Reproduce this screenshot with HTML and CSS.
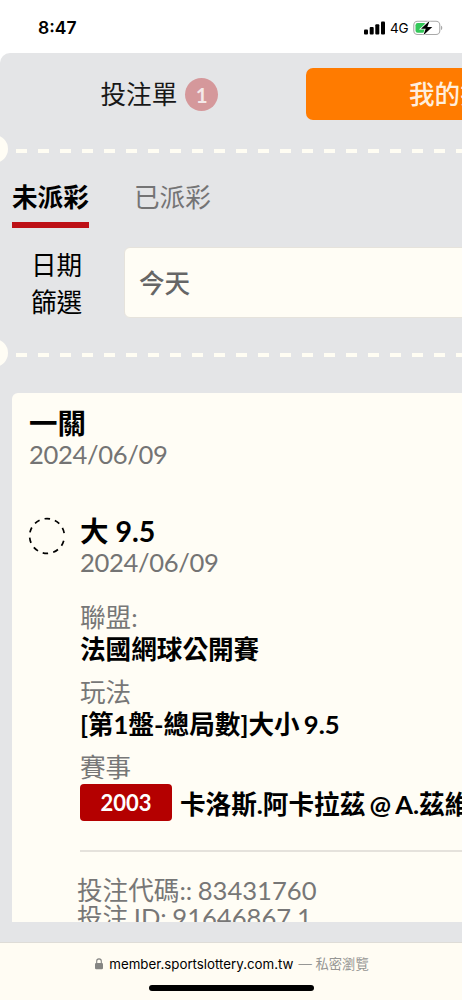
FILE: index.html
```
<!DOCTYPE html>
<html lang="zh-Hant">
<head>
<meta charset="utf-8">
<title>投注單</title>
<link rel="stylesheet" href="styles.css">
</head>
<body>
<div class="status">
  <span class="clock">8:47</span>
  <div class="status-icons">
    <svg class="signal" width="21" height="14" viewBox="0 0 21 14"><rect x="0" y="8.5" width="4" height="5" rx="1"/><rect x="5.7" y="6" width="4" height="7.5" rx="1"/><rect x="11.3" y="3.3" width="4" height="10.2" rx="1"/><rect x="17" y="0.5" width="4" height="13" rx="1"/></svg>
    <span class="network">4G</span>
    <svg class="battery" width="30" height="16" viewBox="0 0 30 16"><rect x=".8" y="1.3" width="26" height="13.2" rx="3.8" fill="none" stroke="#a9a9a9" stroke-width="1.1"/><path d="M28 5.8c1.7.5 1.7 3.7 0 4.2z" fill="#a9a9a9"/><rect x="2.5" y="3" width="10.5" height="9.8" rx="2.2" fill="#34c759"/><path d="M16.6.8 8 8.8h4.7L10.4 15.2 19.3 6.9h-5z" fill="#000" stroke="#fff" stroke-width="1.6" paint-order="stroke"/></svg>
  </div>
</div>
<main class="slip">
  <nav class="switch">
    <div class="switch-item">投注單<span class="count">1</span></div>
    <div class="switch-item active">我的投注</div>
  </nav>
  <div class="perforation"><span class="notch"></span><span class="dashes"></span></div>
  <div class="tabs"><span class="tab selected">未派彩</span><span class="tab">已派彩</span></div>
  <div class="filter">
    <div class="filter-label">日期<br>篩選</div>
    <div class="select">今天</div>
  </div>
  <div class="perforation second"><span class="notch"></span><span class="dashes"></span></div>
  <section class="card">
    <h2 class="title">一關</h2>
    <div class="date">2024/06/09</div>
    <div class="bet">
      <svg class="ring" width="38" height="38" viewBox="0 0 38 38"><circle cx="19" cy="19" r="17.4" transform="rotate(16 19 19)" stroke-dasharray="5.4 5.2 5.4 5.2 5.4 5.2 5.4 5.2 5.4 5.2 5.4 5.2 5.4 5.2 5.4 5.2 5.4 5.2 5.4 9" fill="none" stroke="#000" stroke-width="1.7"/></svg>
      <div class="details">
        <h2 class="title">大 9.5</h2>
        <div class="date">2024/06/09</div>
        <dl class="facts">
          <dt>聯盟:</dt><dd>法國網球公開賽</dd>
          <dt>玩法</dt><dd>[第1盤-總局數]大小 9.5</dd>
          <dt>賽事</dt><dd class="match"><span class="badge">2003</span><span class="players">卡洛斯.阿卡拉茲 @ A.茲維列夫</span></dd>
        </dl>
        <div class="codes"><div>投注代碼:: 83431760</div><div>投注 ID: 91646867.1</div></div>
      </div>
    </div>
  </section>
</main>
<footer class="browser-bar">
  <div class="address"><svg class="lock" width="8" height="12" viewBox="0 0 8 12"><path d="M1.7 6V3.2a2.3 2.3 0 0 1 4.6 0V6" fill="none" stroke="#858583" stroke-width="1.1"/><rect x="0" y="5" width="8" height="6.3" rx="1.2" fill="#858583"/></svg><span class="domain">member.sportslottery.com.tw</span><span class="private">— 私密瀏覽</span></div>
  <div class="home"></div>
</footer>
</body>
</html>
```
FILE: styles.css
```
* { box-sizing: border-box; }
body {
  margin: 0;
  width: 462px;
  height: 1000px;
  overflow: hidden;
  display: flex;
  flex-direction: column;
  background: #fff;
  color: #000;
  font: 25.6px/30px Lato, "Noto Sans CJK TC", sans-serif;
}
.status {
  height: 53px;
  flex: none;
  display: flex;
  justify-content: space-between;
  align-items: flex-start;
  padding: 17px 19px 0 38px;
  font-family: Inter, sans-serif;
}
.clock { font-size: 17.5px; line-height: 22px; font-weight: 600; }
.status-icons { display: flex; align-items: center; height: 22px; }
.network { margin: 0 5px 0 5px; font-size: 13.5px; line-height: 22px; width: 18px; letter-spacing: -0.2px; }
.slip {
  height: 889px;
  flex: none;
  background: #e4e5e7;
  border-top-left-radius: 10px;
  overflow: hidden;
}
.switch { display: flex; height: 82px; padding: 15px 0; white-space: nowrap; }
.switch-item {
  flex: none;
  width: 306px;
  padding-left: 100.5px;
  display: flex;
  align-items: center;
  gap: 8px;
  color: #181818;
}
.count {
  width: 33px;
  height: 33px;
  border-radius: 50%;
  background: #d5989b;
  color: #f4e9e9;
  font-size: 20.5px;
  line-height: 34px;
  text-align: center;
  font-weight: 700;
}
.active {
  padding-left: 103px;
  background: #ff7b00;
  color: #ffeedd;
  border-radius: 7px;
  font-weight: 500;
}
.perforation { display: flex; align-items: center; height: 28px; }
.notch { width: 28px; height: 28px; flex: none; margin-left: -20px; border-radius: 50%; background: #fffdf5; }
.dashes {
  flex: 1;
  height: 4px;
  margin: 4px 0 0 8px;
  background: repeating-linear-gradient(90deg, #fffdf3 0 11px, transparent 11px 22px);
}
.tabs { display: flex; gap: 45px; padding: 19px 0 0 12px; height: 82px; }
.tab { height: 46px; line-height: 30px; color: #747475; }
.selected { color: #000; font-weight: 700; border-bottom: 6px solid #bd1016; width: 77px; }
.filter { display: flex; height: 75px; }
.filter-label { width: 123.5px; padding: 2px 0 0 31px; line-height: 37px; white-space: nowrap; flex: none; }
.select {
  width: 360px;
  height: 71px;
  flex: none;
  margin-top: 2px;
  padding-left: 14.5px;
  line-height: 70px;
  color: #666;
  font-weight: 500;
  background: #fffdf5;
  border: 1px solid #e6e3dc;
  border-radius: 6px;
}
.second { margin-top: 19px; }
.card {
  height: 529px;
  width: 600px;
  margin: 26px 0 0 12px;
  padding: 15px 0 0 17px;
  background: #fffdf5;
  border-top-left-radius: 6px;
  overflow: hidden;
}
.title { margin: 0; font-size: 28.5px; line-height: 31px; font-weight: 700; }
.date { color: #747474; line-height: 30px; letter-spacing: -0.33px; }
.bet { display: flex; gap: 14px; margin-top: 47px; }
.ring { flex: none; margin: 1px 0 0 -1px; }
.details { white-space: nowrap; }
.facts { margin: 25px 0 0; padding-bottom: 29px; border-bottom: 2px solid #e5e2dc; }
.facts dt { line-height: 31px; color: #777; }
.facts dd { margin: 0 0 13px; padding-top: 1px; line-height: 30px; font-weight: 700; word-spacing: -2px; }
.facts .match { display: flex; align-items: center; margin: 1px 0 0; padding: 0; height: 37px; gap: 8px; }
.players { padding-top: 2px; }
.badge {
  width: 92px;
  height: 37px;
  border-radius: 4px;
  background: #b40000;
  color: #fff;
  font-size: 22px;
  line-height: 37px;
  text-align: center;
  font-weight: 700;
}
.codes { margin: 25px 0 0 -3px; line-height: 27px; color: #777; word-spacing: -1px; }
.browser-bar {
  flex: 1;
  border-top: 1px solid #dedcd7;
  background: #fffcf3;
  display: flex;
  flex-direction: column;
  align-items: center;
}
.address { display: flex; align-items: center; height: 42px; font: 13.3px/20px Inter, "Noto Sans CJK TC", sans-serif; margin-left: 2px; }
.domain { margin: 0 5px 0 6px; }
.private { color: #969694; }
.home { width: 165px; height: 6px; margin-top: 0; border-radius: 3px; background: #000; }
```
